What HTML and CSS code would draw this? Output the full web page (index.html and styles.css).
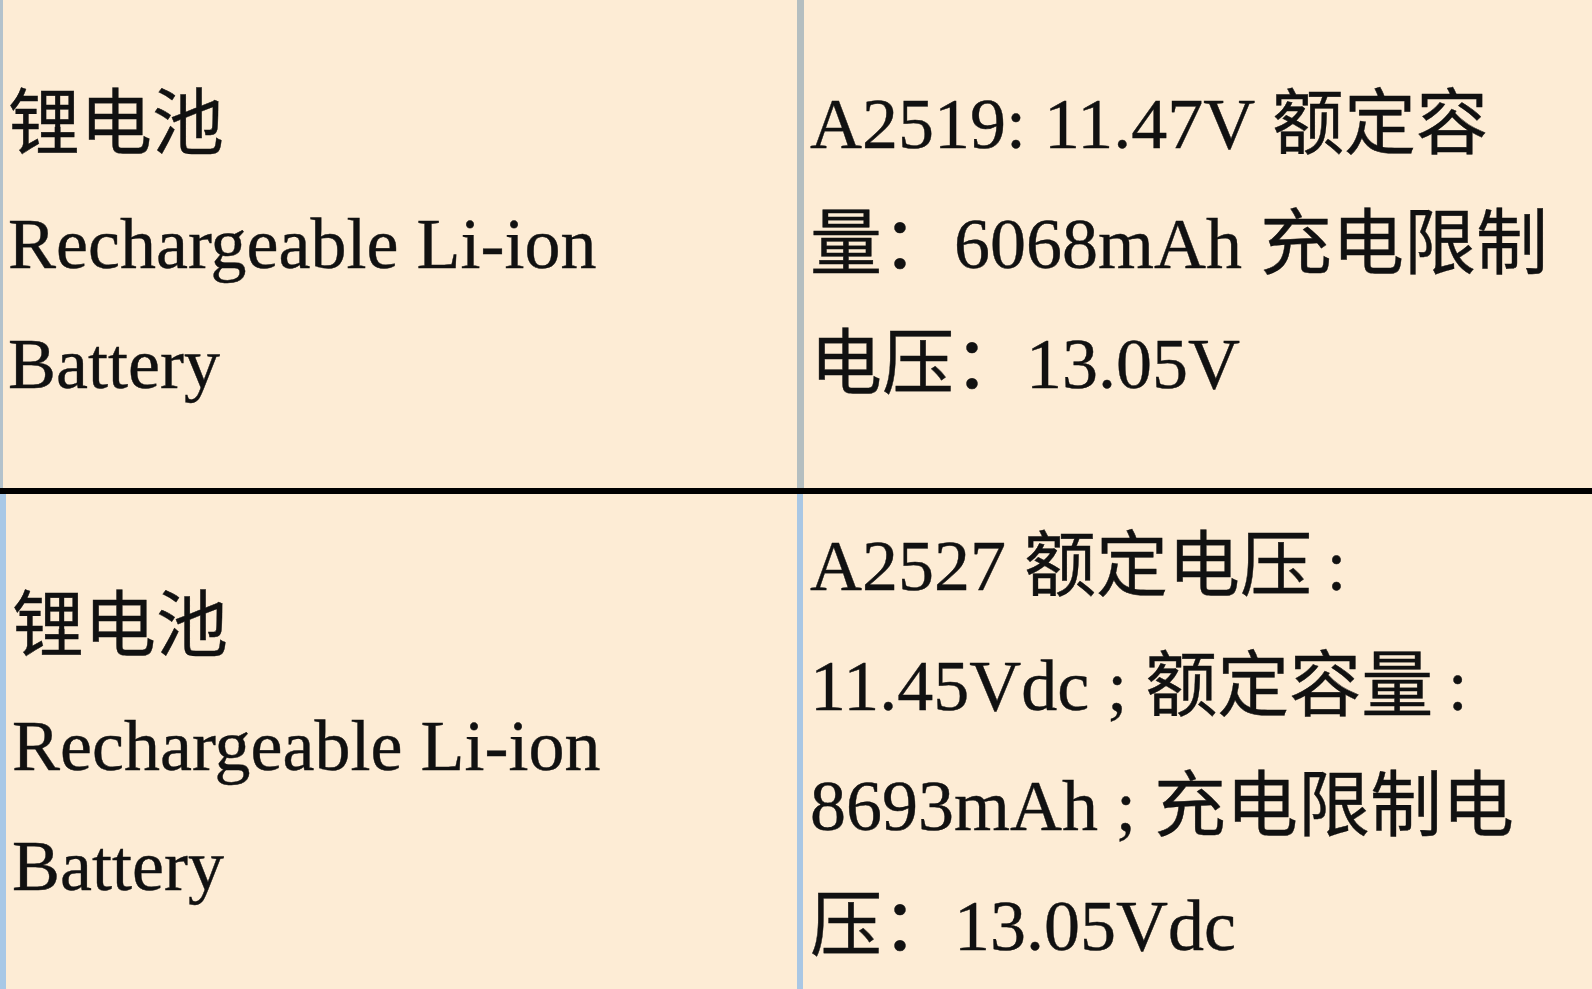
FILE: index.html
```html
<!DOCTYPE html>
<html lang="zh-CN">
<head>
<meta charset="utf-8">
<title>锂电池</title>
<link rel="stylesheet" href="styles.css">
</head>
<body>
<div class="sheet">
  <div class="row row-top">
    <div class="cell cell-left">
      <p class="txt">锂电池<br>Rechargeable Li-ion<br>Battery</p>
    </div>
    <div class="cell cell-right">
      <p class="txt">A2519: 11.47V 额定容<br>量：6068mAh 充电限制<br>电压：13.05V</p>
    </div>
  </div>
  <div class="row row-bottom">
    <div class="cell cell-left">
      <p class="txt">锂电池<br>Rechargeable Li-ion<br>Battery</p>
    </div>
    <div class="cell cell-right">
      <p class="txt">A2527 额定电压&thinsp;:<br>11.45Vdc ; 额定容量&thinsp;:<br>8693mAh ; 充电限制电<br>压：13.05Vdc</p>
    </div>
  </div>
</div>
</body>
</html>
```
FILE: styles.css
```css
html, body {
  margin: 0;
  padding: 0;
  background: #fdecd5;
  overflow: hidden;
}

body {
  width: 1592px;
  height: 989px;
  font-family: "Liberation Serif", "Noto Sans CJK SC", serif;
  color: #111;
}

.sheet {
  display: flex;
  flex-direction: column;
}

.row {
  display: grid;
  grid-template-columns: 797px 1fr;
}

.row-top {
  height: 488px;
}

.row-bottom {
  height: 503px;
  border-top: 6px solid #000;
}

.cell {
  box-sizing: border-box;
  display: flex;
  align-items: center;
  min-width: 0;
}

.txt {
  margin: 0;
  font-size: 72px;
  line-height: 120px;
  white-space: nowrap;
  -webkit-text-stroke: 0.4px #111;
}

.row-top .cell-left {
  border-left: 3px solid #b3c2cc;
  padding-left: 5px;
}

.row-top .cell-right {
  border-left: 7px solid #b4bec0;
  padding-left: 6px;
}

.row-bottom .cell-left {
  border-left: 6px solid #a8c8e6;
  padding-left: 6px;
}

.row-bottom .cell-right {
  border-left: 6px solid #a9c7e4;
  padding-left: 7px;
}
```
